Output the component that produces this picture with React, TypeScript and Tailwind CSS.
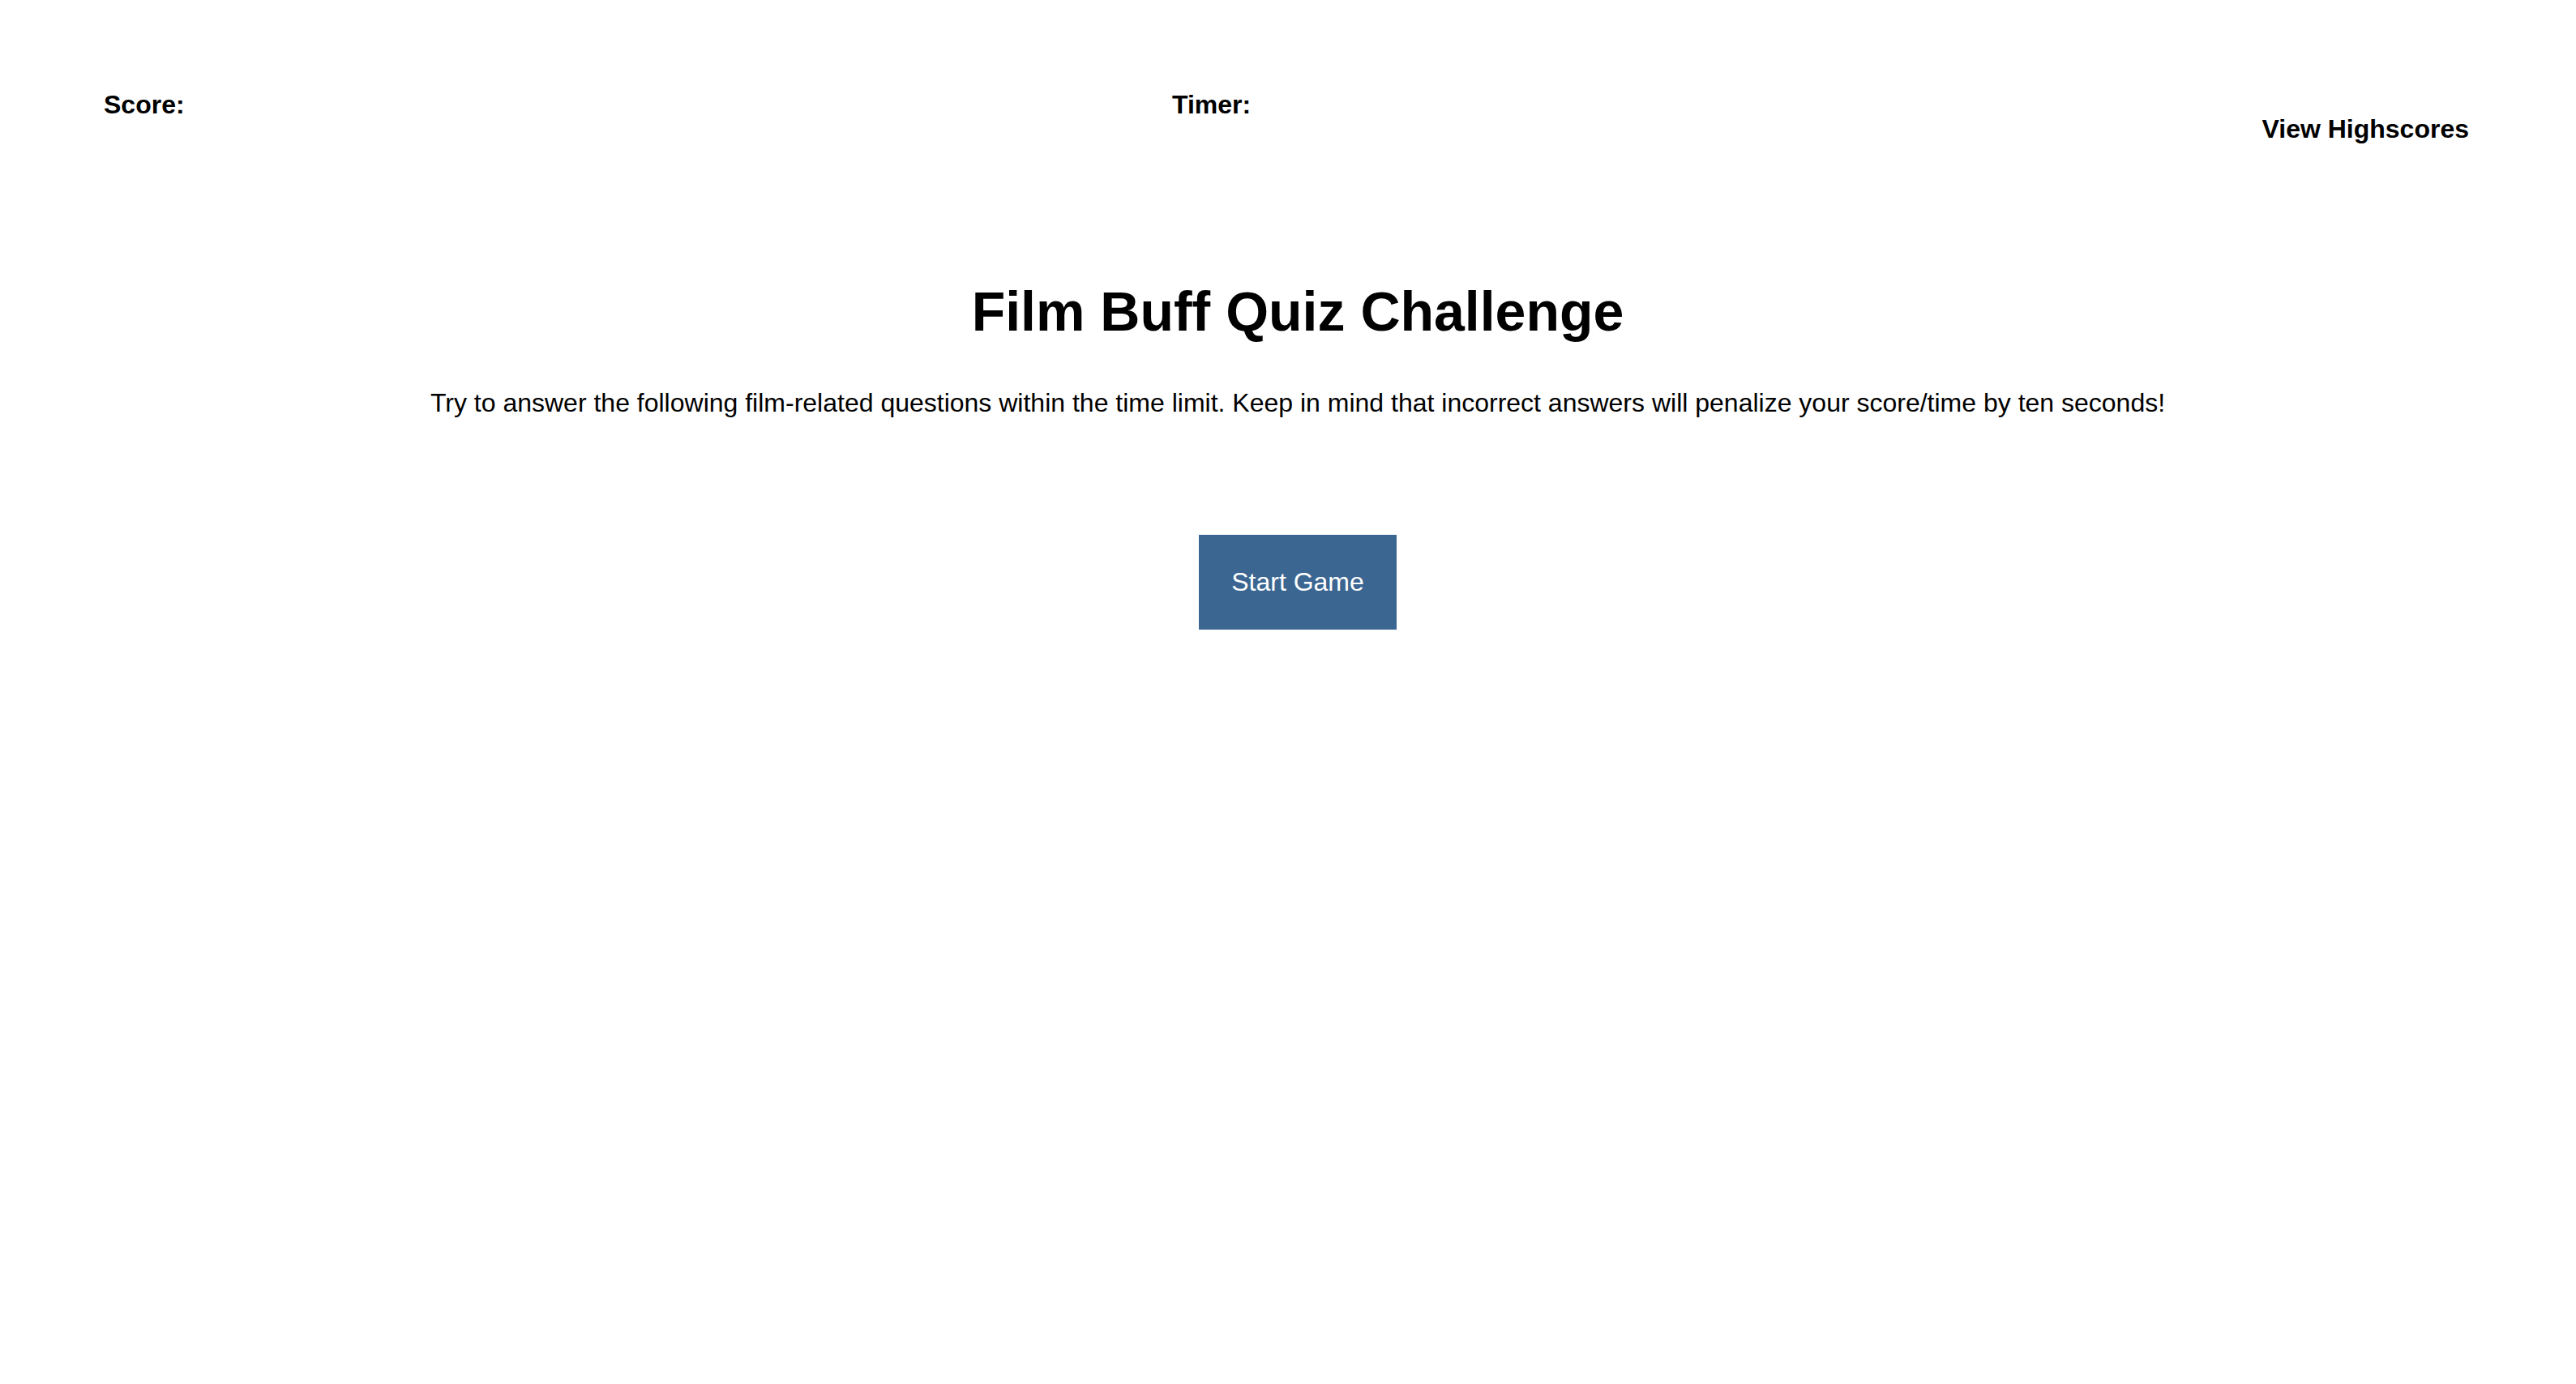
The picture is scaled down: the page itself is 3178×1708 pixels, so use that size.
export default function App() {
  return (
    <div className="min-h-screen bg-white font-['Liberation_Sans',Arial,sans-serif] leading-[1.15] text-black">
      {/* Top bar */}
      <header className="flex items-start pl-[128px] pr-[132px] pt-[111px]">
        <div className="w-[1318px] text-[32px] font-bold">
          Score: <span></span>
        </div>
        <div className="text-[32px] font-bold">
          Timer: <span></span>
        </div>
        <button className="ml-auto mt-[30px] cursor-pointer text-[32px] font-bold">
          View Highscores
        </button>
      </header>

      {/* Intro */}
      <main className="flex flex-col items-center pl-[24px] text-center">
        <h1 className="mt-[167px] text-[68px] font-bold">
          Film Buff Quiz Challenge
        </h1>
        <p className="mt-[56px] text-[32px]">
          Try to answer the following film-related questions within the time
          limit. Keep in mind that incorrect answers will penalize your
          score/time by ten seconds!
        </p>
        <button className="mt-[144px] cursor-pointer bg-[#3a6691] p-[40px] text-[32px] text-white">
          Start Game
        </button>
      </main>
    </div>
  );
}
